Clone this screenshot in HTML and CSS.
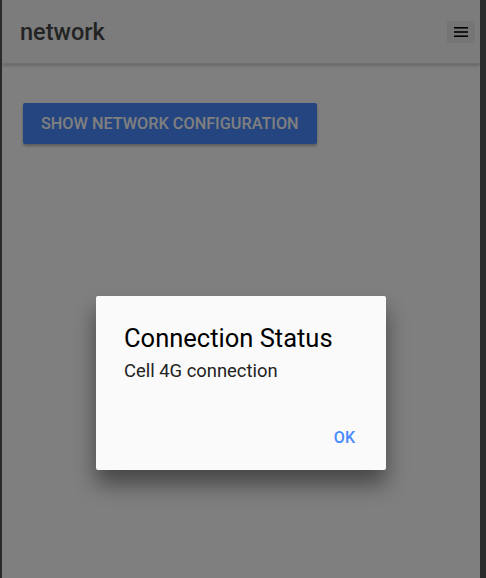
FILE: index.html
```html
<!DOCTYPE html>
<html lang="en">
<head>
<meta charset="utf-8">
<title>network</title>
<link rel="stylesheet" href="styles.css">
</head>
<body>
<div class="screen">
  <header class="toolbar">
    <div class="title">network</div>
    <button class="menu-btn" aria-label="menu">
      <svg width="14" height="10" viewBox="0 0 14 10"><rect x="0" y="0" width="14" height="1.6" fill="#000"/><rect x="0" y="4.2" width="14" height="1.6" fill="#000"/><rect x="0" y="8.4" width="14" height="1.6" fill="#000"/></svg>
    </button>
  </header>
  <main class="content">
    <button class="primary-btn">Show network configuration</button>
  </main>
  <div class="backdrop"></div>
  <div class="alert">
    <div class="alert-title">Connection Status</div>
    <div class="alert-message">Cell 4G connection</div>
    <div class="alert-buttons">
      <button class="alert-btn">OK</button>
    </div>
  </div>
</div>
</body>
</html>
```
FILE: styles.css
```css
html, body {
  margin: 0;
  padding: 0;
}
body {
  background: #2a2a2a;
  width: 486px;
  height: 578px;
  overflow: hidden;
  font-family: Roboto, "Noto Sans", sans-serif;
}
.screen {
  position: relative;
  margin-left: 2px;
  width: 478px;
  height: 578px;
  background: #ffffff;
  overflow: hidden;
}
.toolbar {
  height: 63px;
  background: #f8f8f8;
  border-bottom: 1px solid #e2e2e2;
  box-shadow: 0 2px 3px rgba(0,0,0,0.18);
  display: flex;
  align-items: center;
  justify-content: space-between;
  padding: 0 5px 0 18px;
  position: relative;
}
.title {
  font-size: 23.5px;
  font-weight: 500;
  color: #474747;
  margin-top: 1px;
}
.menu-btn {
  width: 28px;
  height: 22px;
  border: 0;
  padding: 0;
  background: #eaeaea;
  display: flex;
  align-items: center;
  justify-content: center;
}
.content {
  padding: 39px 21px;
}
.primary-btn {
  height: 41px;
  padding: 0 18px;
  border: 0;
  border-radius: 2px;
  background: #488aff;
  color: #ffffff;
  font-family: Roboto, sans-serif;
  font-size: 16.25px;
  font-weight: 500;
  text-transform: uppercase;
  box-shadow: 0 2px 3px rgba(0,0,0,0.3);
}
.backdrop {
  position: absolute;
  inset: 0;
  background: rgba(0,0,0,0.5);
}
.alert {
  position: absolute;
  left: 94px;
  top: 296px;
  width: 290px;
  height: 174px;
  box-sizing: border-box;
  background: #fafafa;
  border-radius: 2px;
  box-shadow: 0 14px 22px rgba(0,0,0,0.45);
  padding: 27px 28px 0 28px;
  display: flex;
  flex-direction: column;
}
.alert-title {
  font-size: 25.5px;
  font-weight: 400;
  color: #000;
  line-height: 30px;
}
.alert-message {
  margin-top: 7px;
  font-size: 18.4px;
  color: #222;
  line-height: 22px;
}
.alert-buttons {
  margin-top: auto;
  margin-bottom: 19px;
  display: flex;
  justify-content: flex-end;
}
.alert-btn {
  border: 0;
  background: transparent;
  color: #488aff;
  font-family: Roboto, sans-serif;
  font-size: 16px;
  font-weight: 500;
  padding: 4px 2px;
  margin-right: 1px;
}
```
